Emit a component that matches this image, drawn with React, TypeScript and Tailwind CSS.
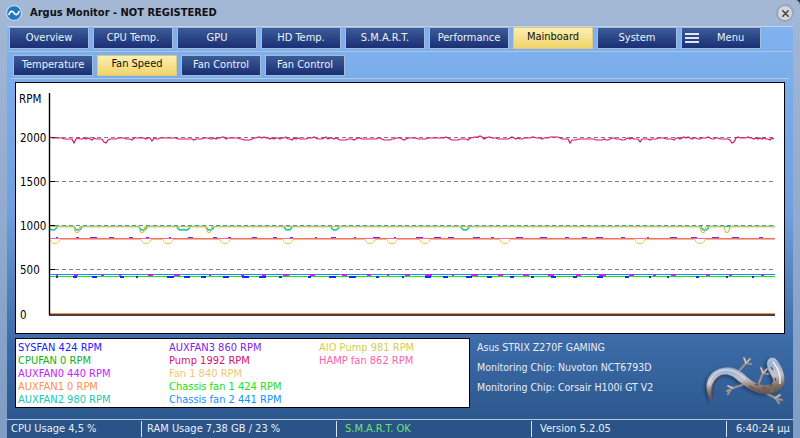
import React from "react";

const FONT = "font-['DejaVu_Sans_Condensed','Liberation_Sans',Arial,sans-serif]";

const topTabs = ["Overview", "CPU Temp.", "GPU", "HD Temp.", "S.M.A.R.T.", "Performance", "Mainboard", "System"];
const subTabs = ["Temperature", "Fan Speed", "Fan Control", "Fan Control"];

const legend = [
    [
        { text: "SYSFAN 424 RPM", color: "text-[#2020ff]" },
        { text: "CPUFAN 0 RPM", color: "text-[#10b020]" },
        { text: "AUXFAN0 440 RPM", color: "text-[#c820ff]" },
        { text: "AUXFAN1 0 RPM", color: "text-[#ff9050]" },
        { text: "AUXFAN2 980 RPM", color: "text-[#18c8b0]" },
    ],
    [
        { text: "AUXFAN3 860 RPM", color: "text-[#8020f0]" },
        { text: "Pump 1992 RPM", color: "text-[#dc1070]" },
        { text: "Fan 1 840 RPM", color: "text-[#f0c878]" },
        { text: "Chassis fan 1 424 RPM", color: "text-[#20e010]" },
        { text: "Chassis fan 2 441 RPM", color: "text-[#1090ff]" },
    ],
    [
        { text: "AIO Pump 981 RPM", color: "text-[#d8cc50]" },
        { text: "HAMP fan 862 RPM", color: "text-[#ff60a8]" },
    ],
];

// small seeded generator so the traces stay the same on every load
function makeRandom(seed: number) {
    let s = seed;
    return () => {
        s = (s * 16807) % 2147483647;
        return s / 2147483647;
    };
}

const X0 = 50;
const X1 = 775;

function pumpLine() {
    const r = makeRandom(7);
    const pts: string[] = [];
    let y = 138;
    for (let x = X0; x <= X1; x += 2) {
        y += (r() - 0.5) * 3;
        y += (138.5 - y) * 0.35;
        let v = Math.round(y);
        if ([74, 105, 152, 570, 640, 733].some((d) => Math.abs(d - x) < 2)) v += 3;
        pts.push(`${x},${v}`);
    }
    return pts.join(" ");
}

// flat line with rounded notches at the given x positions
function dipLine(base: number, dips: number[], depth: number, width: number) {
    const pts: string[] = [];
    for (let x = X0; x <= X1; x += 1) {
        let v = base;
        for (const d of dips) {
            const dist = Math.abs(x - d);
            if (dist < width + 2) {
                const t = 1 - (dist / (width + 2)) ** 3;
                v = Math.max(v, base + depth * t);
            }
        }
        pts.push(`${x},${v.toFixed(1)}`);
    }
    return pts.join(" ");
}

function blips(base: number, seed: number, h: number, step: number) {
    const r = makeRandom(seed);
    const out: { x: number; y: number; w: number; h: number }[] = [];
    for (let x = X0 + 6; x < X1 - 4; x += step + Math.floor(r() * step)) {
        out.push({ x, y: base, w: 2 + Math.floor(r() * 6), h });
    }
    return out;
}

const tealDips = [53, 78, 143, 181, 186, 210, 288, 335, 465, 705];
const yellowDips = [77, 142, 209, 703, 727];
const fanDips = [55, 146, 168, 225, 288, 370, 392, 425, 505, 640, 700];

function FanChart() {
    const grid = [137.5, 181.5, 225.5, 269.5];
    const labels = [
        { y: 142, t: "2000" },
        { y: 186, t: "1500" },
        { y: 230, t: "1000" },
        { y: 274, t: "500" },
        { y: 319, t: "0" },
    ];
    return (
        <svg viewBox="16 83 768 250" className="block w-full h-full">
            {grid.map((y) => (
                <g key={y}>
                    <line x1={49} x2={55} y1={y} y2={y} stroke="#000" />
                    <line x1={55} x2={775} y1={y} y2={y} stroke="#808080" strokeDasharray="4 3" />
                </g>
            ))}
            <polyline points={dipLine(226.5, tealDips, 3.5, 2)} fill="none" stroke="#18c8b0" strokeWidth="1.6" />
            <polyline points={dipLine(226.5, yellowDips, 6, 1)} fill="none" stroke="#d4c23c" strokeWidth="1.2" />
            <polyline points={dipLine(239.5, fanDips, 4, 3)} fill="none" stroke="#e8c858" />
            {blips(237, 11, 2, 14).map((b, i) => (
                <rect key={i} x={b.x} y={b.y} width={b.w} height={b.h} fill="#8020f0" />
            ))}
            <line x1={X0} x2={X1} y1={238.5} y2={238.5} stroke="#ff60a8" />
            <polyline points={pumpLine()} fill="none" stroke="#dc1070" strokeWidth="1.2" />
            <line x1={X0} x2={X1} y1={274.5} y2={274.5} stroke="#1090ff" />
            {blips(274, 23, 2, 18).map((b, i) => (
                <rect key={i} x={b.x} y={b.y} width={b.w} height={b.h} fill="#c820ff" />
            ))}
            <line x1={X0} x2={X1} y1={276.5} y2={276.5} stroke="#20e010" strokeWidth="1.2" />
            {blips(276, 31, 2, 16).map((b, i) => (
                <rect key={i} x={b.x} y={b.y} width={b.w} height={b.h} fill="#2020ff" />
            ))}
            <line x1={X0} x2={X1} y1={313.5} y2={313.5} stroke="#ff9050" />
            <line x1={49.5} x2={49.5} y1={93} y2={315} stroke="#000" strokeWidth="1.4" />
            <line x1={49} x2={775} y1={315} y2={315} stroke="#000" strokeWidth="1.4" />
            <text x={19} y={103} fontSize="11.5" fill="#000">RPM</text>
            {labels.map((l) => (
                <text key={l.t} x={20} y={l.y} fontSize="11.5" fill="#000">{l.t}</text>
            ))}
        </svg>
    );
}

function Lizard() {
    const body = "M711,403 C703,391 703,377 715,370 C725,365 736,367 744,375 C750,381 757,385 765,385 C771,385 774,382 771,377 C768,372 765,367 766,362 C767,357 773,356 776,360 C781,366 785,376 783,384 C780,392 769,396 758,393 C748,390 741,384 735,379 C729,374 722,373 717,377 C710,382 709,392 711,403 Z";
    return (
        <svg viewBox="698 352 90 56" className="w-[90px] h-[56px] shrink-0">
            <defs>
                <linearGradient id="silver" x1="0" y1="0" x2="0.2" y2="1">
                    <stop offset="0" stopColor="#c8dcf4" />
                    <stop offset="0.3" stopColor="#9db4d4" />
                    <stop offset="0.55" stopColor="#c4c2c8" />
                    <stop offset="0.75" stopColor="#86716a" />
                    <stop offset="1" stopColor="#4e4040" />
                </linearGradient>
                <filter id="soft">
                    <feGaussianBlur stdDeviation="1.5" />
                </filter>
            </defs>
            <path d={body} fill="#10305c" opacity="0.7" filter="url(#soft)" transform="translate(-2 1.5)" />
            <g fill="none" stroke="#9c8e8c" strokeWidth="2.2" strokeLinecap="round">
                <path d="M738,371 L745,363 M745,363 L743,358 M745,363 L749,359 M745,363 L750,364" />
                <path d="M758,383 L762,373 M762,373 L760,368 M762,373 L766,369 M762,373 L767,374" />
                <path d="M744,384 L732,388 L726,391 M732,388 L727,386 M730,389 L727,394" />
                <path d="M765,393 L774,398 L781,400 M774,398 L779,395 M775,399 L778,403" />
            </g>
            <g fill="none" stroke="#e8eef6" strokeWidth="0.8" strokeLinecap="round">
                <path d="M745,363 L743,358 M745,363 L749,359 M762,373 L760,368 M762,373 L766,369" />
                <path d="M732,388 L727,386 M774,398 L779,395" />
            </g>
            <path d={body} fill="url(#silver)" stroke="#5d5a60" strokeWidth="0.4" />
            <path d="M708,386 C709,377 715,371 723,370 C731,369 738,373 744,379" fill="none" stroke="#f0f6ff" strokeWidth="1" opacity="0.75" />
            <path d="M712,398 C711,387 714,380 720,376" fill="none" stroke="#54433e" strokeWidth="1.1" />
            <path d="M748,386 C755,391 765,394 774,390" fill="none" stroke="#6d5a52" strokeWidth="1.8" />
            <path d="M772,362 C777,368 780,376 779,384" fill="none" stroke="#eef4fc" strokeWidth="1.4" />
            <path d="M754,384 l3,1 M762,388 l3,0 M769,386 l2,-2 M774,378 l1,3 M770,367 l2,3" stroke="#4e4648" strokeWidth="1.1" fill="none" />
            <circle cx="771" cy="391" r="1.6" fill="#7c7c38" />
        </svg>
    );
}

function TabButton({ label, active }: { label: string; active?: boolean }) {
    return (
        <button
            className={
                active
                    ? "w-20 h-full border border-[#e0c880] bg-gradient-to-b from-[#fbeeb0] to-[#f0d468] text-[11px] text-[#111] pb-[2px]"
                    : "w-20 h-full border border-[#a9bcd6] bg-gradient-to-b from-[#3c5c98] to-[#1a2f74] text-[11px] text-[#eef2fa]"
            }
        >
            {label}
        </button>
    );
}

export default function App() {
    return (
        <div className="w-[800px] h-[438px] overflow-hidden bg-[#30384a]">
            <div className={`${FONT} w-full h-full rounded-tr-[5px] overflow-hidden bg-gradient-to-b from-[#a4b8d6] to-[#7f9cc4] flex flex-col`}>
                <div className="h-[26px] shrink-0 flex items-center pl-[6px] pr-[6px]">
                    <svg viewBox="0 0 16 16" className="w-[16px] h-[16px] mr-[8px]">
                        <circle cx="8" cy="8" r="7.4" fill="#1f78c4" stroke="#dce8f4" strokeWidth="1" />
                        <path d="M3,9.5 C4,5.5 6.5,5.5 8,8 C9.5,10.5 12,10.5 13,6.5" fill="none" stroke="#fff" strokeWidth="1.7" strokeLinecap="round" />
                    </svg>
                    <span className="text-[11px] font-bold text-[#111]">Argus Monitor - NOT REGISTERED</span>
                    <span className="ml-auto w-[18px] h-[18px] rounded-full bg-[#d4d8de] border-2 border-[#9aa6b8] flex items-center justify-center">
                        <svg viewBox="0 0 10 10" className="w-[9px] h-[9px]">
                            <path d="M2,2 L8,8 M8,2 L2,8" stroke="#444" strokeWidth="1.8" strokeLinecap="round" />
                        </svg>
                    </span>
                </div>

                <div className="mx-[7px] h-[412px] shrink-0 flex flex-col bg-[linear-gradient(to_bottom,#80b2f0_0%,#6f9fde_45%,#3a69a5_78%,#2a5488_100%)] border-t border-[#c4d4e8]">
                    <div className="h-[22px] shrink-0 flex gap-1 pl-[2px]">
                        {topTabs.map((t) => (
                            <TabButton key={t} label={t} active={t === "Mainboard"} />
                        ))}
                        <button className="w-20 h-full border border-[#a9bcd6] bg-gradient-to-b from-[#3c5c98] to-[#1a2f74] text-[11px] text-[#eef2fa] flex items-center">
                            <span className="ml-[3px] w-[14px] flex flex-col gap-[2px]">
                                <span className="h-[2px] bg-[#dfe6f0]" />
                                <span className="h-[2px] bg-[#dfe6f0]" />
                                <span className="h-[2px] bg-[#dfe6f0]" />
                            </span>
                            <span className="ml-[18px]">Menu</span>
                        </button>
                    </div>
                    <div className="mt-[2px] h-px shrink-0 bg-[#a9c6ea]" />
                    <div className="mt-[3px] h-[21px] shrink-0 flex gap-1 pl-[6px]">
                        {subTabs.map((t, i) => (
                            <TabButton key={i} label={t} active={t === "Fan Speed"} />
                        ))}
                    </div>
                    <div className="mt-[2px] mx-[4px] h-px shrink-0 bg-[#b4c8de]" />

                    <div className="mt-[3px] ml-[8px] mr-[8px] h-[252px] shrink-0 bg-white border border-black">
                        <FanChart />
                    </div>

                    <div className="mt-[4px] flex pl-[8px] pr-[4px] h-[70px] shrink-0">
                        <div className="w-[455px] shrink-0 bg-white border border-black grid grid-cols-[151px_150px_1fr] pl-[2px] pt-[2px] text-[11px] leading-[13px]">
                            {legend.map((col, i) => (
                                <div key={i}>
                                    {col.map((row) => (
                                        <div key={row.text} className={row.color}>{row.text}</div>
                                    ))}
                                </div>
                            ))}
                        </div>
                        <div className="ml-[7px] flex flex-col gap-[7px] pt-[3px] text-[10.5px] leading-[13px] text-[#e8eef8]">
                            <div>Asus STRIX Z270F GAMING</div>
                            <div>Monitoring Chip: Nuvoton NCT6793D</div>
                            <div>Monitoring Chip: Corsair H100i GT V2</div>
                        </div>
                        <div className="ml-auto self-end">
                            <Lizard />
                        </div>
                    </div>

                    <div className="mt-auto border-t border-[#b4c8e0] h-[19px] shrink-0 flex items-center bg-[#2a5488] text-[11px] text-[#e8eef8] whitespace-nowrap">
                        <div className="w-[134px] pl-[4px]">CPU Usage 4,5 %</div>
                        <div className="w-[195px] pl-[5px] border-l border-[#d8e2ee]">RAM Usage 7,38 GB / 23 %</div>
                        <div className="w-[195px] pl-[8px] border-l border-[#d8e2ee] text-[#70e070]">S.M.A.R.T. OK</div>
                        <div className="w-[195px] pl-[8px] border-l border-[#d8e2ee]">Version 5.2.05</div>
                        <div className="flex-1 pl-[9px] border-l border-[#d8e2ee]">6:40:24 μμ</div>
                    </div>
                </div>
            </div>
        </div>
    );
}
